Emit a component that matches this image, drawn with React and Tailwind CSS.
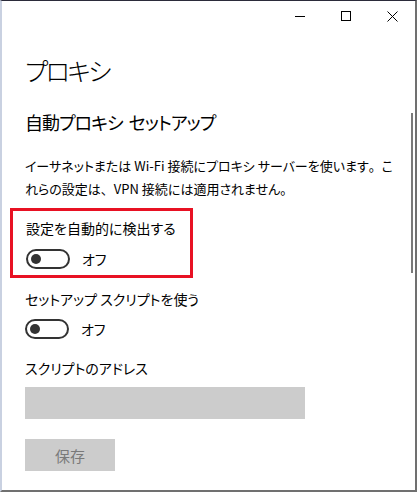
import { useState } from "react";

const jp = { fontFamily: '"Noto Sans CJK JP", "Noto Sans", sans-serif' };

const Toggle = ({ on, onClick }) => (
    <div className="flex items-center gap-[12px] cursor-pointer" onClick={onClick}>
        <div className={on ? "w-[44px] h-[20px] rounded-full border-2 border-[#0078d7] bg-[#0078d7] flex items-center justify-end px-[3px]" : "w-[44px] h-[20px] rounded-full border-2 border-[#333333] flex items-center px-[3px]"}>
            <div className={on ? "w-[10px] h-[10px] rounded-full bg-white" : "w-[10px] h-[10px] rounded-full bg-[#333333]"}></div>
        </div>
        <span className="text-[14px] leading-none text-black">{on ? "オン" : "オフ"}</span>
    </div>
)

const App = () => {
    const [auto, setAuto] = useState(false)
    const [script, setScript] = useState(false)
    return (
        <div style={jp} className="w-[417px] h-[492px] bg-white relative overflow-hidden border-t border-t-[#2b2b3a] border-l-2 border-l-[#c9d1e1] border-r-2 border-r-[#707070] border-b-2 border-b-[#707070] [font-feature-settings:'palt']">
            {/* title bar */}
            <div className="flex justify-end h-[30px]">
                <div className="w-[46px] flex items-center justify-center">
                    <div className="w-[10px] h-px bg-black"></div>
                </div>
                <div className="w-[46px] flex items-center justify-center">
                    <div className="w-[10px] h-[10px] border border-black"></div>
                </div>
                <div className="w-[46px] flex items-center justify-center">
                    <svg width="11" height="11" viewBox="0 0 11 11">
                        <path d="M0.5 0.5L10.5 10.5M10.5 0.5L0.5 10.5" stroke="black" strokeWidth="1" />
                    </svg>
                </div>
            </div>

            <div className="pl-[23px]">
                <h1 className="text-[25px] font-light leading-none mt-[27px] text-black tracking-[-2.5px]">プロキシ</h1>
                <h2 className="text-[18px] leading-none mt-[30px] text-black tracking-[-1px]">
                    自動プロキシ<span className="ml-[6px]">セットアップ</span>
                </h2>
                <p className="text-[13px] leading-[23px] mt-[23px] text-black whitespace-nowrap">
                    イーサネットまたは Wi-Fi 接続にプロキシ サーバーを使います<span className="[font-feature-settings:normal]">。</span>こ<br />
                    れらの設定は<span className="[font-feature-settings:normal]">、</span>VPN 接続には適用されません<span className="[font-feature-settings:normal]">。</span>
                </p>

                <div className="mt-[8px] ml-[-15px] w-[183px] border-[3px] border-[#e81123] pl-[13px] pt-[10px] pb-[6px]">
                    <div className="text-[14px] leading-none text-black">設定を自動的に検出する</div>
                    <div className="mt-[14px]">
                        <Toggle on={auto} onClick={() => setAuto(!auto)} />
                    </div>
                </div>

                <div className="text-[14px] leading-none text-black mt-[14px]">セットアップ スクリプトを使う</div>
                <div className="mt-[13px]">
                    <Toggle on={script} onClick={() => setScript(!script)} />
                </div>

                <div className="text-[14px] leading-none text-black mt-[22px]">スクリプトのアドレス</div>
                <div className="mt-[12px] w-[280px] h-[32px] bg-[#cccccc]"></div>
                <button className="mt-[20px] w-[90px] h-[32px] bg-[#cccccc] text-[#7a7a7a] text-[15px] leading-none">保存</button>
            </div>

            {/* scrollbar */}
            <div className="absolute right-[2px] top-[112px] w-[2px] h-[160px] bg-[#7a7a7a]"></div>
        </div>
    );
};

export default App;
